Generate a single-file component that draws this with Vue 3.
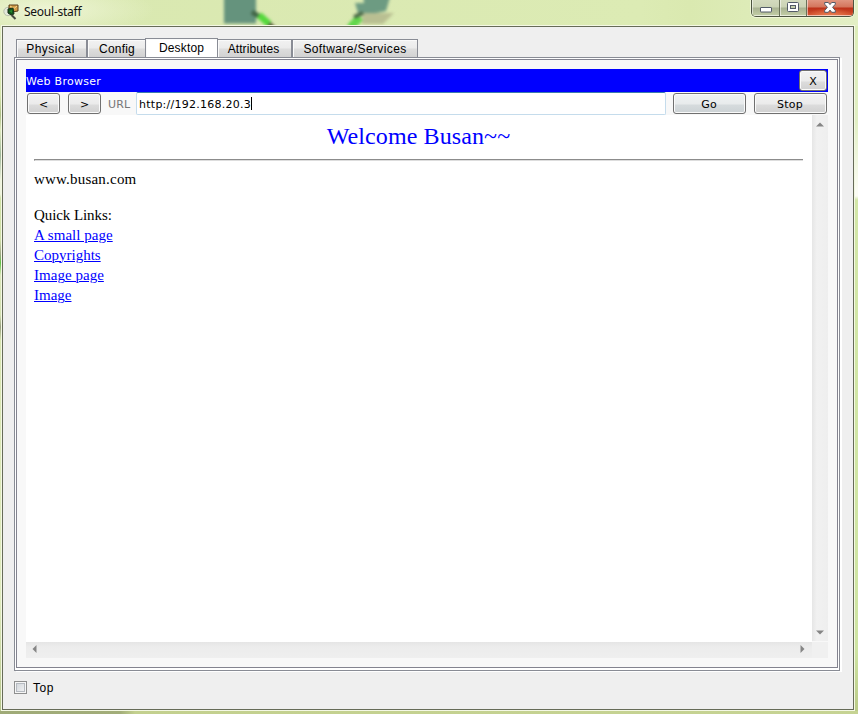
<script setup>
const tabs = [
  { name: 'Physical', cls: 'physical' },
  { name: 'Config', cls: 'config' },
  { name: 'Desktop', cls: 'desktop' },
  { name: 'Attributes', cls: 'attributes' },
  { name: 'Software/Services', cls: 'software' },
]
const links = [
  { name: 'A small page', cls: 'l-small' },
  { name: 'Copyrights', cls: 'l-copy' },
  { name: 'Image page', cls: 'l-ipage' },
  { name: 'Image', cls: 'l-image' },
]
</script>

<template>
  <div class="window">
    <svg class="glass" width="858" height="26" viewBox="0 0 858 26">
      <g class="blurred">
        <rect x="224" y="-12" width="32" height="35.5" fill="#65937d" />
        <path d="M252 12L260 17" stroke="#3f6344" stroke-width="5" />
        <path d="M266 21L274 29" stroke="#5c5a40" stroke-width="5" />
        <path d="M259 15L269 24" stroke="#55d83c" stroke-width="7" />
        <path d="M350 28L360 17" stroke="#62d74b" stroke-width="8" />
        <path d="M363 13H394L383 24H362Z" fill="#b9bf92" />
        <path d="M363 -6H391L386 11L376 13H358L355 3H364Z" fill="#6d9b82" />
        <path d="M354 17L363 13" stroke="#4a6847" stroke-width="4" />
      </g>
    </svg>
    <header class="titlebar">
      <svg class="app-icon" width="17" height="18" viewBox="0 0 17 18">
        <circle cx="5" cy="8.5" r="4.2" fill="#e3e8db" stroke="#b6bea9" />
        <path d="M6 2L15 2L15 8L9 9L6 7Z" fill="#d09a45" stroke="#5c401d" />
        <path d="M7 3L11 5.5L14 3" fill="none" stroke="#f6d88e" />
        <path d="M5 6L10 5L11 11L8 12L5 10Z" fill="#14551b" stroke="#163116" />
        <path d="M6 8L9 7L9 10Z" fill="#268b2e" />
        <path d="M8.5 12L12.5 16" stroke="#494d43" stroke-width="2" />
      </svg>
      <span class="title">Seoul-staff</span>
      <div class="controls">
        <div class="ctl min">
          <svg width="12" height="6" viewBox="0 0 12 6"><rect x=".5" y=".5" width="11" height="4.5" rx=".5" fill="#fff" stroke="#535b68" /></svg>
        </div>
        <div class="ctl max">
          <svg width="12" height="11" viewBox="0 0 12 11"><rect x=".5" y=".5" width="11" height="9" rx="1" fill="#fff" stroke="#535b68" /><rect x="3.5" y="3.5" width="5" height="3" fill="#c6cfad" stroke="#535b68" /></svg>
        </div>
        <div class="ctl close">
          <svg width="12" height="11" viewBox="0 0 12 11"><path d="M.7 .5H4.3L6 2.6L7.7 .5H11.3V2.2L8.6 5.3L11.3 8.5V10.3H7.7L6 8.1L4.3 10.3H.7V8.5L3.4 5.3L.7 2.2Z" fill="#fff" stroke="#535b68" /></svg>
        </div>
      </div>
    </header>

    <main class="client">
      <nav class="tabs">
        <div v-for="t in tabs" :key="t.name" class="tab" :class="t.cls"><span>{{ t.name }}</span></div>
      </nav>
      <section class="pane">
        <div class="pane-inner">
          <div class="browser">
            <div class="caption"><span>Web Browser</span><button class="btn x">X</button></div>
            <div class="toolbar">
              <button class="btn nav">&lt;</button>
              <button class="btn nav next">&gt;</button>
              <span class="label">URL</span>
              <div class="field"><span>http://192.168.20.3</span><i class="caret"></i></div>
              <button class="btn wide go">Go</button>
              <button class="btn wide stop">Stop</button>
            </div>
            <div class="view">
              <article class="page">
                <h1><span>Welcome Busan~~</span></h1>
                <div class="rule"></div>
                <p class="site"><span>www.busan.com</span></p>
                <p class="quick"><span>Quick Links:</span></p>
                <p v-for="l in links" :key="l.name"><a :class="l.cls">{{ l.name }}</a></p>
              </article>
              <div class="vbar">
                <svg width="8" height="5" viewBox="0 0 8 5"><path d="M0 4.5L4 .5L8 4.5Z" fill="#858585" /></svg>
                <svg width="8" height="5" viewBox="0 0 8 5"><path d="M0 .5L4 4.5L8 .5Z" fill="#858585" /></svg>
              </div>
              <div class="hbar">
                <svg width="5" height="8" viewBox="0 0 5 8"><path d="M4.5 0L.5 4L4.5 8Z" fill="#858585" /></svg>
                <svg width="5" height="8" viewBox="0 0 5 8"><path d="M.5 0L4.5 4L.5 8Z" fill="#858585" /></svg>
              </div>
              <div class="corner"></div>
            </div>
          </div>
        </div>
      </section>
      <footer class="bottom"><span class="check"></span><span class="top">Top</span></footer>
    </main>
  </div>
</template>

<style>
body { margin: 0; overflow: hidden; }
</style>

<style scoped>
* { box-sizing: border-box; }
.window {
  position: relative; width: 858px; height: 714px; overflow: hidden;
  background:
    radial-gradient(ellipse 110px 26px at 45px 10px, #f3f8dfcc, #f3f8df00) no-repeat,
    linear-gradient(90deg, #d9e8b0, #dcebb4 640px, #dae9b0 690px, #e3efc5) 0 0 / 858px 26px no-repeat,
    linear-gradient(90deg, #9faa77 0, #a2ad79 120px, #c3d08e 135px, #c6d393) 0 711px / 858px 3px no-repeat,
    linear-gradient(#e4efc5 0, #d6e6ac 95px, #aebf88 115px, #dfeabf 130px, #9fb89b 155px, #eef3dd 180px, #eef3dd 194px, #d0e2a6 198px, #d0dfa8 240px, #a0a886 254px, #5fc245 263px, #dbe7ba 275px, #d3e0b0 315px, #989f7f 327px, #d8e5b0 340px, #dfebbd 600px, #b4c389 714px) 0 0 / 4px 714px no-repeat,
    linear-gradient(#dcecb6 0, #e1efc3 120px, #fbfcf4 190px, #fbfcf4 196px, #d3e7a8 200px, #cfe5a3 650px, #b9c986 714px) 854px 0 / 4px 714px no-repeat,
    #eef4d8;
}
.glass { position: absolute; left: 0; top: 0; }
.blurred { filter: blur(1.8px); }
.titlebar { position: relative; height: 26px; display: flex; align-items: flex-start; padding-left: 3px; }
.app-icon { margin-top: 3px; }
.title { margin: 3px 0 0 4px; font: 12px/17px "Noto Sans", sans-serif; letter-spacing: -.25px; color: #111; white-space: nowrap; }
.controls {
  margin: 0 4px 0 auto; height: 17px; width: 103px; display: flex; overflow: hidden;
  border: 1px solid #4d5440; border-top: 0; border-radius: 0 0 5px 5px; box-shadow: 0 0 0 1px #f4f9e0cc;
}
.ctl { display: flex; justify-content: center; align-items: flex-start; box-shadow: inset 1px 0 #ffffff88, inset 0 -1px #ffffff99; background: linear-gradient(#d3dabe 0, #cbd3b5 7px, #a9b392 8px, #c4cfa6 16px); }
.min { width: 28px; border-right: 1px solid #6a7259; padding-top: 7px; }
.max { width: 27px; border-right: 1px solid #6a7259; padding-top: 2px; }
.close { flex: 1; padding-top: 2px; background: radial-gradient(ellipse 26px 9px at 50% 17px, #f08a5a, #f08a5a00), linear-gradient(#e0957f 0, #d4755c 7px, #bd3219 8px, #d2502e 16px); }
.client {
  position: relative; margin-left: 2px; width: 852px; height: 684px; background: #efefef;
  border: 1px solid #666b58; box-shadow: 0 0 0 1px #f4f8e4; padding: 11px 0 0 11px;
}
.tabs { position: relative; z-index: 1; height: 19px; padding-left: 2px; display: flex; align-items: flex-end; }
.tab {
  height: 18px; border: 1px solid #898c95; border-bottom: 0; box-shadow: inset 1px 1px #fafafa;
  background: linear-gradient(#f2f2f2 0, #ebebeb 8px, #dddddd 9px, #d2d2d2 17px);
  font: 12px/18px "Liberation Sans", sans-serif; color: #000; text-align: center; white-space: nowrap;
}
.physical { width: 71px; letter-spacing: .5px; padding-right: 2px; }
.config { width: 59px; letter-spacing: .2px; padding-left: 1px; }
.desktop { width: 73px; height: 19px; background: #fff; margin-left: -1px; letter-spacing: .15px; line-height: 18px; }
.attributes { width: 75px; margin-left: -1px; letter-spacing: .1px; padding-right: 2px; }
.software { width: 126px; letter-spacing: .38px; }
.pane { width: 826px; height: 614px; border: 1px solid #898c95; background: #fff; padding: 1px 1px 2px; box-shadow: 2px 1px #fff; }
.pane-inner { width: 822px; height: 609px; border: 1px solid #83838f; background: #f8f8f8; padding: 9px; }
.browser { width: 802px; height: 589px; font: 11px/14px "DejaVu Sans", sans-serif; }
.caption { height: 23px; background: #00f; color: #fff; display: flex; align-items: center; justify-content: space-between; padding-right: 1px; letter-spacing: .28px; }
.caption > span { padding-top: 2px; }
.btn {
  font: inherit; color: #000; padding: 2px 0 0; height: 21px; border: 1px solid #707070; border-radius: 3px;
  box-shadow: inset 0 0 0 1px #fafafa; background: linear-gradient(#f2f2f2 0, #ebebeb 10px, #dcdcdc 11px, #cfcfcf 20px);
}
.x { width: 28px; }
.toolbar { height: 23px; display: flex; align-items: center; padding: 0 1px; }
.nav { width: 33px; }
.next { margin-left: 8px; }
.label { width: 28px; margin-left: 7px; padding-top: 2px; color: #777; letter-spacing: .1px; }
.field { width: 530px; height: 23px; border: 1px solid #c5dcec; border-top-color: #3d7bad; border-radius: 2px; background: #fff; display: flex; align-items: center; padding: 2px 0 0 2px; letter-spacing: .26px; }
.caret { width: 1px; height: 13px; margin-top: -2px; background: #000; }
.wide { width: 73px; margin-left: 7px; letter-spacing: .2px; padding-right: 1px; }
.go { background: linear-gradient(#f0f2f3 0, #e8ebec 10px, #d6dbdd 11px, #cbd1d4 20px); }
.stop { margin-left: 8px; }
.view { display: grid; grid-template-columns: 786px 16px; grid-template-rows: 527px 16px; }
.page { background: #fff; padding: 7px 9px 0 8px; font: 15px/20px "Liberation Serif", serif; color: #000; }
h1 { margin: 0; font-size: 24px; line-height: 28px; font-weight: 400; color: #00f; text-align: center; letter-spacing: .1px; }
.rule { height: 2px; margin-top: 9px; border-top: 1px solid #8c8c8c; border-left: 1px solid #8c8c8c; border-bottom: 1px solid #ddd; }
p { margin: 0; height: 20px; white-space: nowrap; }
.site { margin-top: 8px; letter-spacing: .2px; }
.quick { margin-top: 16px; letter-spacing: -.08px; }
a { color: #00f; text-decoration: underline; text-decoration-thickness: 1px; }
.l-small, .l-ipage { letter-spacing: .03px; }
.vbar { height: 526px; background: linear-gradient(90deg, #e6e6e6, #f1f1f1 30%, #eee); display: flex; flex-direction: column; justify-content: space-between; align-items: center; padding: 7px 0 6px; }
.hbar { background: linear-gradient(#e5e5e5, #ececec 30%, #efefef); display: flex; justify-content: space-between; align-items: center; padding: 0 7px 2px 6px; }
.corner { background: #f0f0f0; }
.bottom { display: flex; align-items: center; height: 17px; margin-top: 8px; font: 12px/17px "Liberation Sans", sans-serif; }
.check { width: 13px; height: 13px; border: 1px solid #8e8f8f; box-shadow: inset 0 0 0 1px #f6f6f6, inset 0 0 0 2px #b5bac0; background: linear-gradient(135deg, #cdd2d8, #f6f6f6); }
.top { margin-left: 6px; padding-top: 1px; letter-spacing: .5px; }
</style>
